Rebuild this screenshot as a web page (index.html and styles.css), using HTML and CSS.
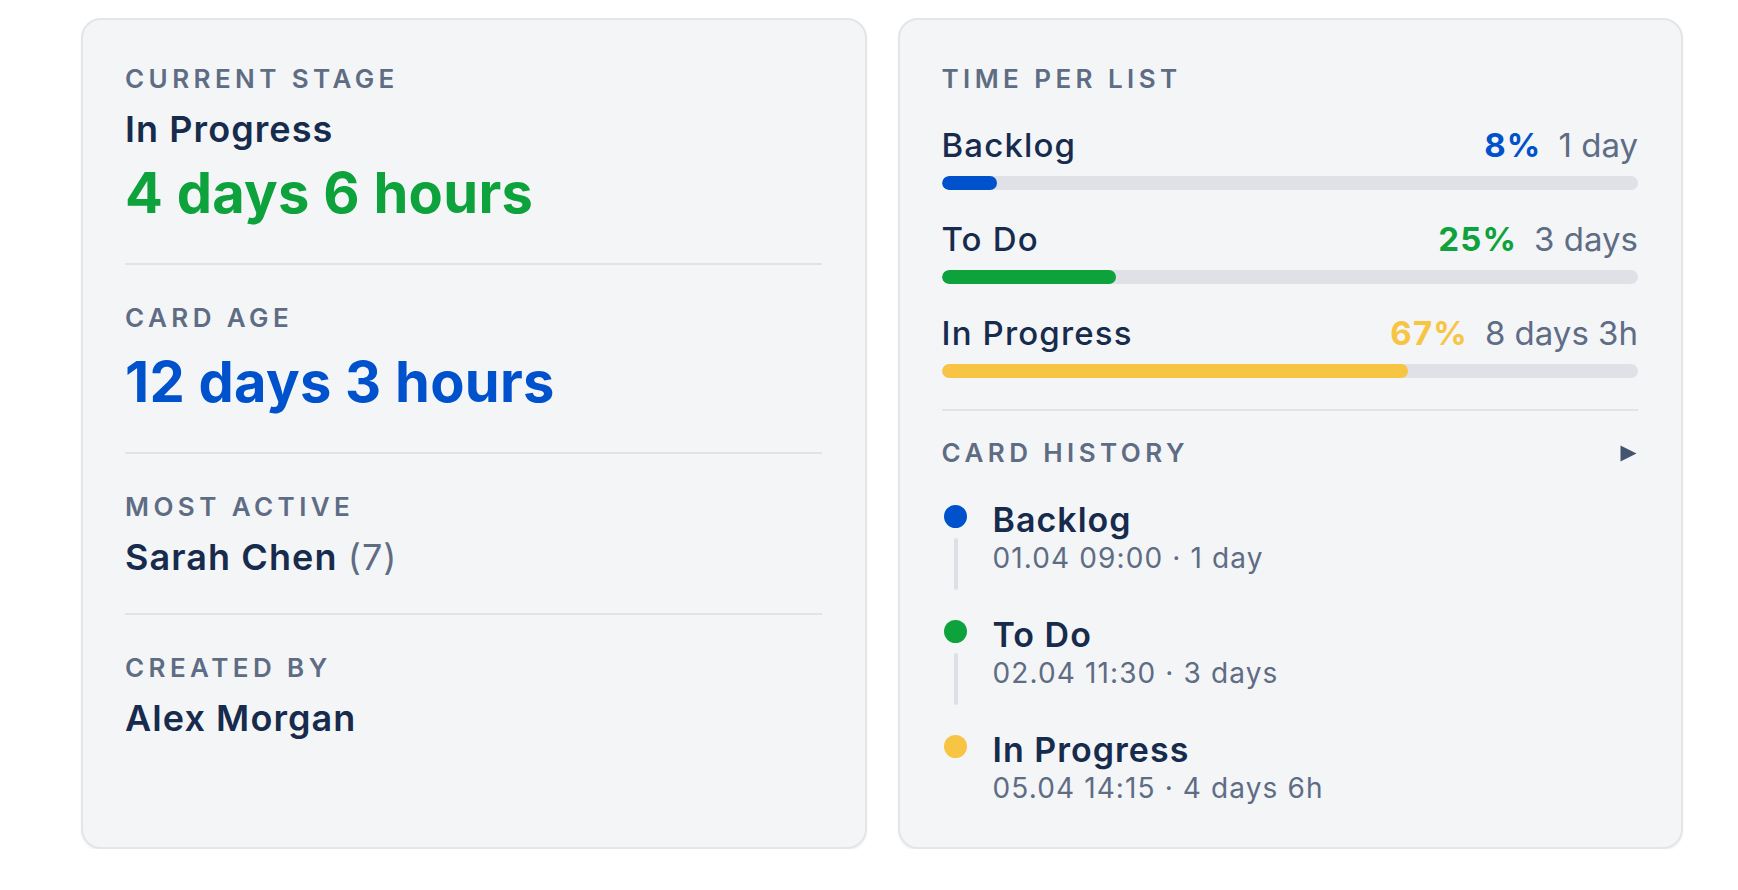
FILE: index.html
```html
<!DOCTYPE html>
<html lang="en">
<head>
    <meta charset="UTF-8">
    <title>Card stats</title>
    <link rel="stylesheet" href="styles.css">
</head>
<body>
    <div class="panels">

        <!-- left: stage, age, people -->
        <div class="card">
            <div class="section">
                <div class="label">Current stage</div>
                <div class="name">In Progress</div>
                <div class="big green">4 days 6 hours</div>
            </div>
            <div class="section">
                <div class="label">Card age</div>
                <div class="big blue">12 days 3 hours</div>
            </div>
            <div class="section">
                <div class="label">Most active</div>
                <div class="name">Sarah Chen <span class="count">(7)</span></div>
            </div>
            <div class="section">
                <div class="label">Created by</div>
                <div class="name">Alex Morgan</div>
            </div>
        </div>

        <!-- right: time per list + history -->
        <div class="card">
            <div class="section lists-section">
                <div class="label">Time per list</div>
                <div class="lists">
                    <div class="list-row">
                        <div class="list-head">
                            <span class="list-name">Backlog</span>
                            <span class="list-stat"><b class="blue">8%</b><span class="time">1 day</span></span>
                        </div>
                        <div class="track"><div class="fill bg-blue" style="width: 8%"></div></div>
                    </div>
                    <div class="list-row">
                        <div class="list-head">
                            <span class="list-name">To Do</span>
                            <span class="list-stat"><b class="green">25%</b><span class="time">3 days</span></span>
                        </div>
                        <div class="track"><div class="fill bg-green" style="width: 25%"></div></div>
                    </div>
                    <div class="list-row">
                        <div class="list-head">
                            <span class="list-name">In Progress</span>
                            <span class="list-stat"><b class="yellow">67%</b><span class="time">8 days 3h</span></span>
                        </div>
                        <div class="track"><div class="fill bg-yellow" style="width: 67%"></div></div>
                    </div>
                </div>
            </div>
            <div class="section history">
                <div class="history-head">
                    <div class="label">Card history</div>
                    <svg class="toggle" width="19" height="19" viewBox="0 0 19 19">
                        <path d="M1.5 1.5 L17.5 9.5 L1.5 17.5 Z" fill="#44546f"/>
                    </svg>
                </div>
                <div class="event">
                    <div class="rail"><span class="dot bg-blue"></span><span class="line"></span></div>
                    <div>
                        <div class="event-title">Backlog</div>
                        <div class="event-meta">01.04 09:00 · 1 day</div>
                    </div>
                </div>
                <div class="event">
                    <div class="rail"><span class="dot bg-green"></span><span class="line"></span></div>
                    <div>
                        <div class="event-title">To Do</div>
                        <div class="event-meta">02.04 11:30 · 3 days</div>
                    </div>
                </div>
                <div class="event">
                    <div class="rail"><span class="dot bg-yellow"></span></div>
                    <div>
                        <div class="event-title">In Progress</div>
                        <div class="event-meta">05.04 14:15 · 4 days 6h</div>
                    </div>
                </div>
            </div>
        </div>

    </div>
</body>
</html>
```

FILE: styles.css
```css
body {
    margin: 0;
    background-color: #ffffff;
    font-family: Inter, "Noto Sans", sans-serif;
    color: #172b4d;
}

.panels {
    display: grid;
    grid-template-columns: 1fr 1fr;
    gap: 31px;
    padding: 18px 55px 0 81px;
}

.card {
    background-color: #f4f5f7;
    border: 2px solid #e3e5e9;
    border-radius: 20px;
    padding: 43px 43px 43px 42px;
    box-shadow: 0 2px 2px rgba(9, 30, 66, 0.05);
}

.section {
    padding: 37px 0 38px;
    border-bottom: 2px solid #e1e3e8;
}

.section:first-child {
    padding-top: 0;
}

.section:last-child {
    border-bottom: none;
    padding-bottom: 0;
}

.label {
    font-size: 26px;
    line-height: 32px;
    font-weight: 600;
    letter-spacing: 0.17em;
    text-transform: uppercase;
    color: #5e6c84;
    margin-bottom: 16px;
}

.name {
    font-size: 36px;
    line-height: 36px;
    font-weight: 600;
    letter-spacing: 0.03em;
}

.count {
    font-weight: 400;
    color: #5e6c84;
}

.big {
    font-size: 56px;
    line-height: 64px;
    font-weight: 700;
    letter-spacing: 0.005em;
}

.name + .big {
    margin-top: 14px;
}

.green { color: #0da23b; }
.blue { color: #0052cc; }
.yellow { color: #f7c543; }

.bg-green { background-color: #0da23b; }
.bg-blue { background-color: #0052cc; }
.bg-yellow { background-color: #f7c543; }

/* time per list */
.lists-section {
    padding-bottom: 31px;
}

.lists {
    display: flex;
    flex-direction: column;
    gap: 31px;
    padding-top: 16px;
}

.list-head {
    display: flex;
    justify-content: space-between;
    align-items: center;
    font-size: 33px;
    line-height: 36px;
    letter-spacing: 0.035em;
}

.list-name {
    font-weight: 500;
}

.list-stat {
    display: flex;
    gap: 17px;
    color: #5e6c84;
}

.list-stat b {
    font-weight: 700;
}

.list-stat .time {
    letter-spacing: 0;
}

.track {
    height: 14px;
    margin-top: 13px;
    border-radius: 7px;
    background-color: #dfe1e6;
    overflow: hidden;
}

.fill {
    height: 100%;
    border-radius: 7px;
}

/* card history */
.history {
    padding-top: 26px;
}

.history-head {
    display: flex;
    justify-content: space-between;
    align-items: center;
    margin-bottom: 33px;
}

.history-head .label {
    margin-bottom: 0;
}

.event {
    display: flex;
    gap: 23px;
    padding-bottom: 43px;
}

.event:last-child {
    padding-bottom: 0;
}

.rail {
    width: 28px;
    display: flex;
    flex-direction: column;
    align-items: center;
    margin-bottom: -16px;
}

.dot {
    width: 23px;
    height: 23px;
    border-radius: 50%;
    margin-top: 3px;
}

.line {
    flex: 1;
    width: 4px;
    margin-top: 10px;
    border-radius: 2px;
    background-color: #dcdfe4;
}

.event-title {
    font-size: 34px;
    line-height: 36px;
    font-weight: 600;
    letter-spacing: 0.03em;
}

.event-meta {
    font-size: 28px;
    line-height: 32px;
    margin-top: 4px;
    letter-spacing: 0.04em;
    color: #5e6c84;
}
```
